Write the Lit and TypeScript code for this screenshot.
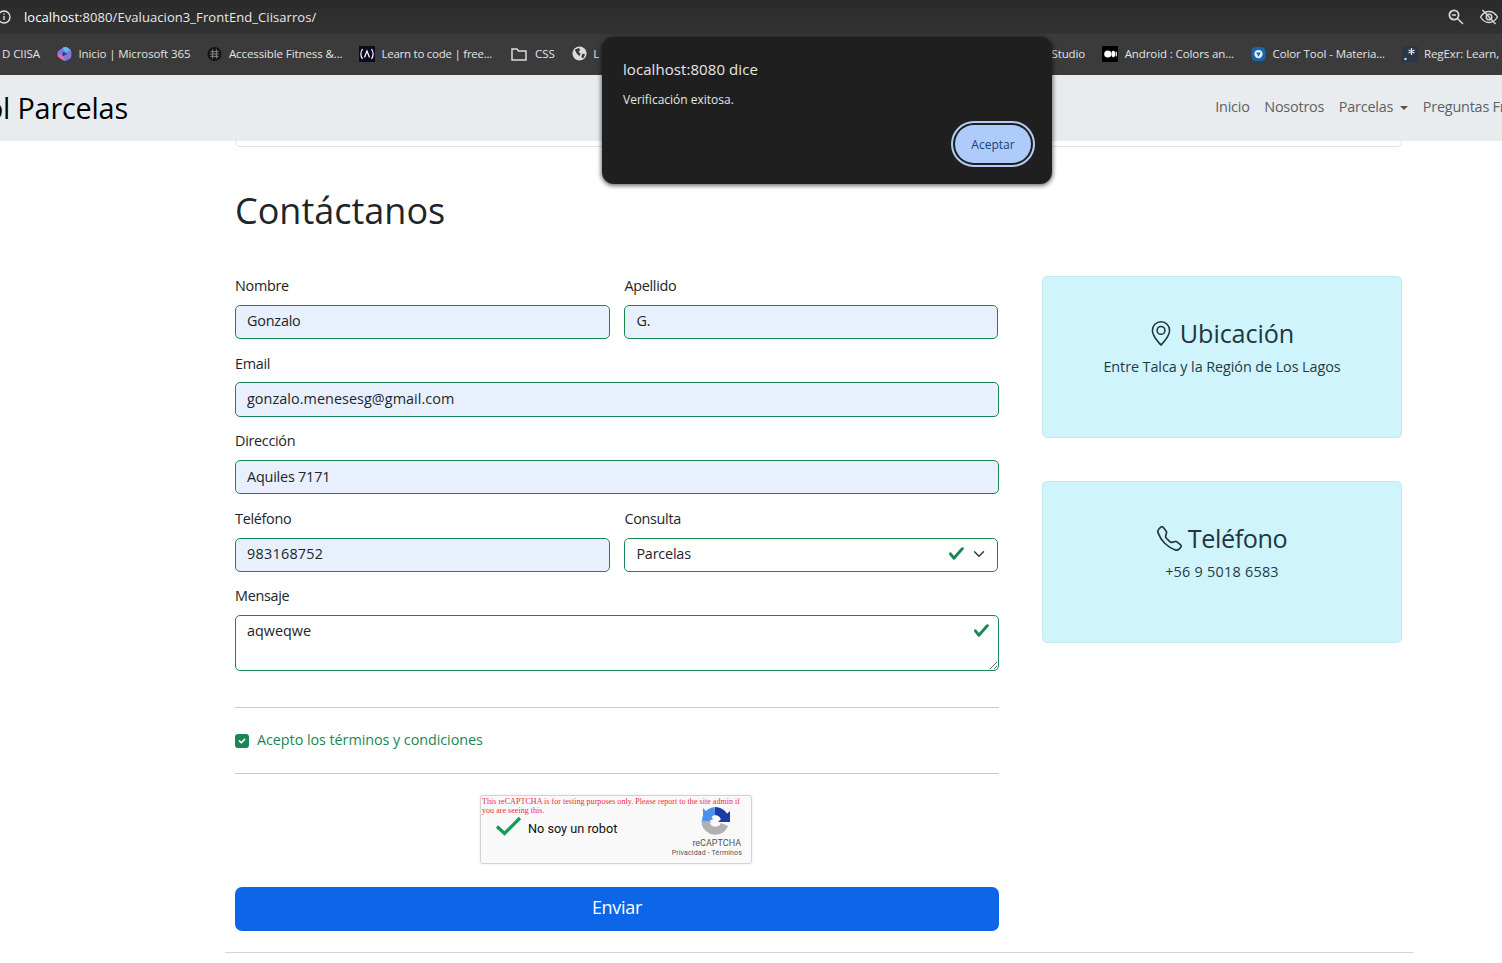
import { LitElement, html, css } from "lit";
import { customElement } from "lit/decorators.js";

const check = html`<svg class="chk" viewBox="0 0 8 8" width="17" height="17"><path fill="#198754" d="M2.3 6.73.6 4.53c-.4-1.04.46-1.4 1.1-.8l1.1 1.4 3.4-3.8c.6-.63 1.6-.27 1.2.7l-4 4.6c-.43.5-.8.4-1.1.1z"/></svg>`;

@customElement("app-root")
export class AppRoot extends LitElement {
  static styles = css`
    :host { display: block; height: 963px; overflow: hidden; position: relative; background: #fff; font-family: "Open Sans", "Noto Sans", sans-serif; color: #212529; font-size: 14.4px; }
    * { box-sizing: border-box; }
    .url { height: 34px; background: linear-gradient(#2a2a2a, #333333); display: flex; align-items: center; color: #e8e8e8; font-size: 13px; letter-spacing: 0.07px; padding-right: 3px; }
    .url .info { margin-left: -4px; margin-right: 12px; flex: none; }
    .url .host { color: #fff; }
    .url .sp { flex: 1; }
    .url .tool { margin-left: 14px; display: block; }
    .marks { height: 41px; padding-bottom: 2px; background: #3b3b3b; display: flex; align-items: center; color: #e3e3e3; font-size: 11.5px; letter-spacing: -0.1px; white-space: nowrap; overflow: hidden; }
    .mark { display: flex; align-items: center; gap: 6.5px; margin-right: 17px; flex: none; }
    .mark svg { display: block; flex: none; }
    .first { margin-left: 2px; }
    .learn { gap: 6px; letter-spacing: -0.25px; }
    .folder { gap: 8px; margin-left: 2px; }
    .reg { margin-right: 0; width: 100px; overflow: hidden; gap: 6px; }
    .mid { flex: 1; }
    .nav { height: 66px; background: #e9ecef; display: flex; align-items: center; justify-content: space-between; white-space: nowrap; overflow: hidden; }
    .brand { font-size: 28.8px; color: #000; margin-left: -14px; letter-spacing: -0.2px; margin-top: -2px; }
    .links { display: flex; align-items: center; gap: 14.6px; margin-right: -3.5px; color: #5c6166; font-size: 14.4px; letter-spacing: -0.2px; margin-top: -4px; }
    .caret { display: inline-block; margin-left: 7px; vertical-align: 2px; border-top: 4.3px solid #555; border-left: 4.3px solid transparent; border-right: 4.3px solid transparent; }
    .wrap { width: 1167px; margin-left: 235px; }
    .remnant { height: 6px; border: 1px solid #e2e3e5; border-top: 0; border-radius: 0 0 5px 5px; }
    h1 { font-size: 36px; font-weight: 400; margin: 39px 0 0; line-height: 50px; height: 50px; letter-spacing: 0; }
    .cols { display: flex; justify-content: space-between; margin-top: 40px; }
    form { width: 764px; display: block; }
    .row { display: grid; grid-template-columns: 375px 374px; column-gap: 14.4px; }
    .field { display: block; margin-bottom: 14.4px; position: relative; }
    label { display: block; line-height: 20px; margin-bottom: 8.8px; letter-spacing: -0.3px; }
    input[type="text"], .select, textarea { display: block; width: 100%; height: 34.4px; border: 1px solid #198754; border-radius: 5px; padding: 0 11px 2px; font: inherit; color: #212529; letter-spacing: -0.2px; outline: none; background: #fff; }
    input[type="text"] { background: #e8f0fe; }
    input.wide { letter-spacing: 0.05px; }
    input.digits { letter-spacing: 0.25px; }
    .select { display: flex; align-items: center; justify-content: space-between; padding-right: 12px; }
    .select .ic { display: flex; align-items: center; gap: 8px; }
    textarea { height: 56px; padding: 5px 11px; display: block; letter-spacing: 0; }
    .ta-chk { position: absolute; right: 9px; top: 36px; display: block; }
    .chk { display: block; }
    hr { border: 0; border-top: 1px solid #c9c9c9; margin: 0; }
    .hr1 { margin-top: 36px; }
    .agree { display: flex; align-items: center; gap: 8px; height: 65px; color: #198754; letter-spacing: -0.07px; }
    .agree .txt { margin-top: -2px; }
    .box { width: 14px; height: 14px; border-radius: 3px; background: #198754; display: flex; align-items: center; justify-content: center; flex: none; }
    .cap { width: 272px; height: 69px; margin: 21px auto 0; position: relative; background: #f9f9f9; border: 1px solid #d3d3d3; border-radius: 3px; box-shadow: 0 0 3px rgba(0,0,0,.1); overflow: hidden; transform: translateX(-1px); }
    .warn { position: absolute; left: 1px; top: 1px; width: 262px; font: 8.1px/9px "Liberation Serif", serif; color: #ef2b40; }
    .tick { position: absolute; left: 14px; top: 20px; }
    .robot { position: absolute; left: 47px; top: 25px; font: 12.7px/16px Roboto, sans-serif; color: #111; }
    .logo { position: absolute; left: 219px; top: 10px; }
    .rc { position: absolute; right: 10px; top: 41px; font: 9px/12px Roboto, sans-serif; color: #555; }
    .terms { position: absolute; right: 9px; top: 53px; font: 7px/9px Roboto, sans-serif; color: #555; letter-spacing: .15px; white-space: nowrap; }
    .send { display: block; width: 100%; height: 44px; margin-top: 23px; padding: 0 0 4px; background: #0d65e8; border: 0; border-radius: 7px; color: #fff; font: inherit; font-size: 18px; letter-spacing: -0.3px; }
    aside { width: 360px; display: flex; flex-direction: column; gap: 43px; }
    .card { height: 162px; background: #cff4fc; border: 1px solid #c2e9f1; border-radius: 5px; color: #1f3b44; text-align: center; padding-top: 38px; }
    .card .t { font-size: 25.2px; line-height: 36px; display: flex; align-items: center; justify-content: center; gap: 8px; letter-spacing: -0.1px; color: #213640; }
    .card .t.phone { gap: 6px; letter-spacing: -0.4px; }
    .card .d { line-height: 24px; margin-top: 4px; letter-spacing: -0.08px; }
    .card .d.num { letter-spacing: 0.25px; }
    .bottom { border-top: 1px solid #d5d5d5; margin: 21px 0 0 225px; width: 1188px; }
    .dialog { position: absolute; left: 602px; top: 37px; width: 450px; height: 147px; background: #1f1f1f; border-radius: 12px; box-shadow: 0 1px 4px 1px rgba(0,0,0,.55); color: #e6e6e6; padding: 0 21px; }
    .dialog .ti { font-size: 15px; line-height: 20px; margin-top: 22px; letter-spacing: 0.07px; }
    .dialog .ms { font-size: 12px; line-height: 16px; margin-top: 13px; letter-spacing: 0; }
    .ok { position: absolute; left: 349px; top: 84px; width: 84px; height: 46px; border: 2px solid #b3cdf8; border-radius: 23px; padding: 2px; background: transparent; display: block; }
    .ok span { display: flex; width: 100%; height: 100%; background: #aecbfa; color: #1c3f78; font-size: 12px; letter-spacing: 0; border-radius: 19px; align-items: center; justify-content: center; }
  `;

  field(label: string, value: string, cls = "") {
    return html`<div class="field"><label>${label}</label><input class=${cls} type="text" .value=${value} /></div>`;
  }

  render() {
    return html`
      <div class="url">
        <svg class="info" width="16" height="16" viewBox="0 0 16 16" fill="none" stroke="#e8e8e8" stroke-width="1.3"><circle cx="8" cy="8" r="6"/><path d="M8 7v4M8 4.6v1.2"/></svg>
        <span><span class="host">localhost</span>:8080/Evaluacion3_FrontEnd_Ciisarros/</span>
        <span class="sp"></span>
        <svg class="tool" width="18" height="18" viewBox="0 0 18 18" fill="none" stroke="#d8d8d8" stroke-width="1.8"><circle cx="7" cy="7" r="4.600"/><path d="M10.500 10.500 16 16M5 7h4" stroke-width="1.500"/></svg>
        <svg class="tool" width="20" height="18" viewBox="0 0 20 18" fill="none" stroke="#d8d8d8" stroke-width="1.4"><path d="M1.5 9C4 5 7 3.5 10 3.5S16 5 18.500 9C16 13 13 14.500 10 14.500S4 13 1.500 9z"/><circle cx="10" cy="9" r="2.800"/><path d="M3.500 2 16.500 16"/></svg>
      </div>
      <div class="marks">
        <div class="mark first"><span>D CIISA</span></div>
        <div class="mark"><svg width="15" height="16" viewBox="0 0 16 16"><path fill="#7f77e8" d="M6 1.500C8 .2 10 .5 12 1.800l1.800 1.200c1 .7 1.500 1.600 1.500 2.800v4.400c0 1.200-.5 2.100-1.500 2.800L12 14.200c-2 1.300-4 1.600-6 .3L2.500 12C1.300 11.200.7 10.200.7 9V7c0-1.200.6-2.200 1.800-3z"/><path fill="#e56bb5" d="M.7 7 8 11.500V15c-1 0-1.500-.2-2-.5L2.500 12C1.300 11.200.7 10.200.7 9z"/><path fill="#5cc0ee" d="M6 1.500C8 .2 10 .5 12 1.800l1.800 1.200L10.500 6 8 4.800z"/><path fill="#3b3b3b" d="M6 5.500 11 8 6 10.500z"/></svg><span>Inicio | Microsoft 365</span></div>
        <div class="mark"><svg width="15" height="16" viewBox="0 0 16 16"><circle cx="8" cy="8" r="7.500" fill="#141414"/><path stroke="#8a8a8a" stroke-width="1" d="M3.500 5.500h9M3.500 8h9M3.500 10.500h9M6 3v10M10 3v10"/></svg><span>Accessible Fitness &...</span></div>
        <div class="mark learn"><svg width="16" height="16" viewBox="0 0 16 16"><rect width="16" height="16" fill="#0a0a23"/><path fill="none" stroke="#fff" stroke-width="1.200" d="M3.500 3C1.500 6 1.500 10 3.500 13M12.500 3C14.500 6 14.500 10 12.500 13M5.500 11.500 8 5l2.500 6.500"/></svg><span>Learn to code | free...</span></div>
        <div class="mark folder"><svg width="16" height="14" viewBox="0 0 16 14" fill="none" stroke="#dcdcdc" stroke-width="1.500"><path d="M1 2h5l1.500 2H15v9H1z"/></svg><span>CSS</span></div>
        <div class="mark"><svg width="15" height="15" viewBox="0 0 16 16"><circle cx="8" cy="8" r="7.500" fill="#dcdcdc"/><path fill="#3b3b3b" d="M3 4l4-2 2 2-2 2 2 2-1 3-3-3zM11 8l3 1-2 4-2-1z"/></svg><span>L</span></div>
        <div class="mid"></div>
        <div class="mark"><span>Studio</span></div>
        <div class="mark"><svg width="16" height="16" viewBox="0 0 16 16"><rect width="16" height="16" rx="1" fill="#000"/><circle cx="5.800" cy="8" r="3.600" fill="#fff"/><ellipse cx="11.300" cy="8" rx="1.800" ry="3.300" fill="#fff"/><ellipse cx="14.200" cy="8" rx=".7" ry="2.800" fill="#fff"/></svg><span>Android : Colors an...</span></div>
        <div class="mark"><svg width="15" height="16" viewBox="0 0 16 16"><rect x=".5" y=".5" width="15" height="15" rx="5" fill="#1a66a8"/><circle cx="8" cy="8" r="4.400" fill="#e6f3fb"/><path fill="#1a66a8" d="M5.500 6.500h5L8 11z"/></svg><span>Color Tool - Materia...</span></div>
        <div class="mark reg"><svg width="16" height="16" viewBox="0 0 16 16"><rect width="16" height="16" fill="#2a3644"/><circle cx="3.500" cy="13" r="1.300" fill="#b8d4ee"/><path stroke="#dce9f5" stroke-width="1.300" d="M9.500 2v7M6.500 4 12.500 7M12.500 4 6.500 7"/></svg><span>RegExr: Learn,</span></div>
      </div>
      <nav class="nav">
        <div class="brand">ol Parcelas</div>
        <div class="links"><span>Inicio</span><span>Nosotros</span><span>Parcelas<i class="caret"></i></span><span>Preguntas Fr</span></div>
      </nav>
      <main class="wrap">
        <div class="remnant"></div>
        <h1>Contáctanos</h1>
        <div class="cols">
          <form>
            <div class="row">${this.field("Nombre", "Gonzalo")}${this.field("Apellido", "G.")}</div>
            ${this.field("Email", "gonzalo.menesesg@gmail.com", "wide")}
            ${this.field("Dirección", "Aquiles 7171")}
            <div class="row">
              ${this.field("Teléfono", "983168752", "digits")}
              <div class="field"><label>Consulta</label>
                <div class="select"><span>Parcelas</span>
                  <span class="ic">${check}<svg width="12" height="12" viewBox="0 0 16 16" fill="none" stroke="#343a40" stroke-width="2" stroke-linecap="round" stroke-linejoin="round"><path d="m2 5 6 6 6-6"/></svg></span>
                </div>
              </div>
            </div>
            <div class="field"><label>Mensaje</label><textarea .value=${"aqweqwe"}></textarea><span class="ta-chk">${check}</span></div>
            <hr class="hr1" />
            <div class="agree"><span class="box"><svg width="10" height="10" viewBox="0 0 20 20" fill="none" stroke="#fff" stroke-width="3.500" stroke-linecap="round" stroke-linejoin="round"><path d="m5 10 3.500 3.500L15 7"/></svg></span><span class="txt">Acepto los términos y condiciones</span></div>
            <hr />
            <div class="cap">
              <div class="warn">This reCAPTCHA is for testing purposes only. Please report to the site admin if you are seeing this.</div>
              <svg class="tick" width="27" height="20" viewBox="0 0 27 20" fill="none" stroke="#0f9d58" stroke-width="3.200"><path d="M2 10.500 9.500 17.500 25 2"/></svg>
              <div class="robot">No soy un robot</div>
              <svg class="logo" width="30" height="30" viewBox="0 0 30 30" fill="none" stroke-width="8">
                <path stroke="#b0b0b0" d="M24.500 18.500A10 10 0 0 1 5.500 17"/>
                <path fill="#b0b0b0" d="M1 15h11l-8 8z"/>
                <path stroke="#4a90f0" d="M6 15A10 10 0 0 1 15 5"/>
                <path fill="#4a90f0" d="M3 2v12h11z"/>
                <path stroke="#1c3aa9" d="M15 5A10 10 0 0 1 25 14"/>
                <path fill="#1c3aa9" d="M30 5v11H18z"/>
                <circle cx="14" cy="16" r="3" fill="#f9f9f9"/>
              </svg>
              <div class="rc">reCAPTCHA</div>
              <div class="terms">Privacidad - Términos</div>
            </div>
            <button class="send" type="button">Enviar</button>
          </form>
          <aside>
            <div class="card">
              <div class="t"><svg width="22" height="25" viewBox="2 0 12 16" fill="#213640"><path d="M12.166 8.94c-.524 1.062-1.234 2.12-1.96 3.07A31.493 31.493 0 0 1 8 14.58a31.481 31.481 0 0 1-2.206-2.57c-.726-.95-1.436-2.008-1.96-3.07C3.304 7.867 3 6.862 3 6a5 5 0 0 1 10 0c0 .862-.305 1.867-.834 2.94zM8 16s6-5.686 6-10A6 6 0 0 0 2 6c0 4.314 6 10 6 10z"/><path d="M8 8a2 2 0 1 1 0-4 2 2 0 0 1 0 4zm0 1a3 3 0 1 0 0-6 3 3 0 0 0 0 6z"/></svg><span>Ubicación</span></div>
              <div class="d">Entre Talca y la Región de Los Lagos</div>
            </div>
            <div class="card">
              <div class="t phone"><svg width="25" height="25" viewBox="0 0 16 16" fill="#213640"><path d="M3.654 1.328a.678.678 0 0 0-1.015-.063L1.605 2.3c-.483.484-.661 1.169-.45 1.77a17.568 17.568 0 0 0 4.168 6.608 17.569 17.569 0 0 0 6.608 4.168c.601.211 1.286.033 1.77-.45l1.034-1.034a.678.678 0 0 0-.063-1.015l-2.307-1.794a.678.678 0 0 0-.58-.122l-2.19.547a1.745 1.745 0 0 1-1.657-.459L5.482 8.062a1.745 1.745 0 0 1-.46-1.657l.548-2.19a.678.678 0 0 0-.122-.58L3.654 1.328zM1.884.511a1.745 1.745 0 0 1 2.612.163L6.29 2.98c.329.423.445.974.315 1.494l-.547 2.19a.678.678 0 0 0 .178.643l2.457 2.457a.678.678 0 0 0 .644.178l2.189-.547a1.745 1.745 0 0 1 1.494.315l2.306 1.794c.829.645.905 1.87.163 2.611l-1.034 1.034c-.74.74-1.846 1.065-2.877.702a18.634 18.634 0 0 1-7.01-4.42 18.634 18.634 0 0 1-4.42-7.009c-.362-1.03-.037-2.137.703-2.877L1.885.511z"/></svg><span>Teléfono</span></div>
              <div class="d num">+56 9 5018 6583</div>
            </div>
          </aside>
        </div>
      </main>
      <div class="bottom"></div>
      <div class="dialog" role="dialog">
        <div class="ti">localhost:8080 dice</div>
        <div class="ms">Verificación exitosa.</div>
        <div class="ok"><span>Aceptar</span></div>
      </div>
    `;
  }
}
